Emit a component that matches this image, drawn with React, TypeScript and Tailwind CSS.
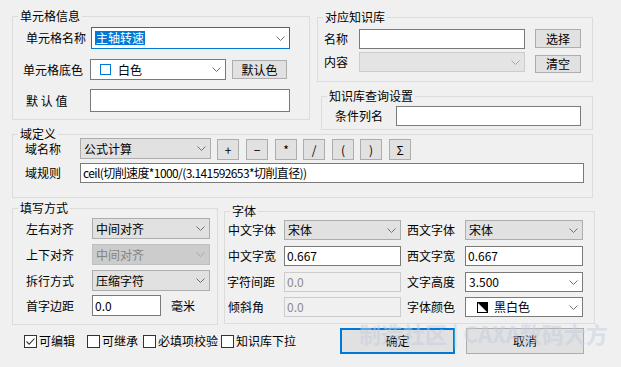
import React from 'react';
import clsx from 'clsx';

type ComboKind = 'edit' | 'focus' | 'list' | 'disabled' | 'disabledEdit';

const comboKinds: Record<ComboKind, string> = {
  edit: 'bg-white border-[#7a7a7a]',
  focus: 'bg-white border-[#0078d7]',
  list: 'bg-[#e1e1e1] border-[#adadad]',
  disabled: 'bg-[#cccccc] border-[#bfbfbf] text-[#838383]',
  disabledEdit: 'bg-[#e4e4e4] border-[#cccccc]',
};

const Chevron = ({ light }: { light?: boolean }) => (
  <svg width="9" height="5" viewBox="0 0 9 5" className="shrink-0">
    <path
      d="M0.5 0.5 L4.5 4.5 L8.5 0.5"
      fill="none"
      className={light ? 'stroke-[#a8a8a8]' : 'stroke-[#707070]'}
      strokeWidth="1"
    />
  </svg>
);

const Combo: React.FC<{ kind?: ComboKind; className?: string; children?: React.ReactNode }> = ({
  kind = 'edit',
  className,
  children,
}) => (
  <div className={clsx('flex items-center border pl-[3px] pr-[4px] shrink-0', comboKinds[kind], className)}>
    <div className="flex-1 flex items-center min-w-0 whitespace-nowrap">{children}</div>
    <Chevron light={kind === 'disabled' || kind === 'disabledEdit'} />
  </div>
);

const TextBox: React.FC<{ disabled?: boolean; className?: string; children?: React.ReactNode }> = ({
  disabled,
  className,
  children,
}) => (
  <div
    className={clsx(
      'flex items-center border pl-[2px] whitespace-nowrap shrink-0',
      disabled ? 'bg-[#f0f0f0] border-[#cccccc] text-[#8a8a8a]' : 'bg-white border-[#7a7a7a]',
      className
    )}
  >
    {children}
  </div>
);

const Button: React.FC<{ className?: string; primary?: boolean; children?: React.ReactNode }> = ({
  className,
  primary,
  children,
}) => (
  <div
    className={clsx(
      'flex items-center justify-center bg-[#e1e1e1] shrink-0',
      primary ? 'border-2 border-[#0078d7]' : 'border border-[#adadad]',
      className
    )}
  >
    {children}
  </div>
);

const GroupBox: React.FC<{ title: string; className?: string; children?: React.ReactNode }> = ({
  title,
  className,
  children,
}) => (
  <fieldset className={clsx('border border-[#dcdcdc] min-w-0 shrink-0', className)}>
    <legend className="ml-[5px] px-[2px] leading-[14px]">{title}</legend>
    {children}
  </fieldset>
);

const CheckBox: React.FC<{ checked?: boolean; label: string; className?: string }> = ({ checked, label, className }) => (
  <div className={clsx('flex items-center shrink-0', className)}>
    <div className="w-[13px] h-[13px] border border-[#333333] bg-white flex items-center justify-center">
      {checked && (
        <svg width="11" height="11" viewBox="0 0 11 11">
          <path d="M1.5 5.5 L4.2 8.2 L9.5 2.5" fill="none" className="stroke-[#333333]" strokeWidth="1.1" />
        </svg>
      )}
    </div>
    <span className="ml-[2px]">{label}</span>
  </div>
);

// operator buttons of the 域名称 row: [glyph, left margin]
const ops: [string, string][] = [
  ['+', 'ml-[6px]'],
  ['−', 'ml-[7px]'],
  ['*', 'ml-[7px]'],
  ['/', 'ml-[6px]'],
  ['(', 'ml-[7px]'],
  [')', 'ml-[6px]'],
  ['Σ', 'ml-[7px]'],
];

export default function App() {
  return (
    <div className="relative w-[621px] h-[367px] overflow-hidden bg-[#f0f0f0] text-[12px] leading-[14px] text-black font-['Noto_Sans_CJK_SC','Microsoft_YaHei',sans-serif]">
      {/* top: 单元格信息 + 知识库 */}
      <div className="flex items-start pt-[9px]">
        <GroupBox title="单元格信息" className="ml-[12px] w-[298px] h-[111px]">
          <div className="flex items-center h-[22px] mt-[4px] pl-[13px]">
            <span className="w-[65px]">单元格名称</span>
            <Combo kind="focus" className="w-[199px] h-[22px]">
              <span className="bg-[#0078d7] text-white px-[1px]">主轴转速</span>
            </Combo>
          </div>
          <div className="flex items-center h-[21px] mt-[10px] pl-[10px]">
            <span className="w-[67px]">单元格底色</span>
            <Combo className="w-[136px] h-[21px]">
              <span className="ml-[6px] w-[11px] h-[11px] border border-[#0078d7] bg-white" />
              <span className="ml-[7px]">白色</span>
            </Combo>
            <Button className="ml-[6px] w-[55px] h-[19px]">默认色</Button>
          </div>
          <div className="flex items-center h-[23px] mt-[9px] pl-[13px]">
            <span className="w-[64px]">默 认 值</span>
            <TextBox className="w-[200px] h-[23px]" />
          </div>
        </GroupBox>

        <div className="ml-[7px] flex flex-col">
          <GroupBox title="对应知识库" className="mt-[1px] w-[276px] h-[72px]">
            <div className="flex items-start mt-[5px] pl-[6px]">
              <span className="w-[35px] leading-[20px]">名称</span>
              <TextBox className="w-[166px] h-[20px]" />
              <Button className="ml-[10px] w-[46px] h-[19px]">选择</Button>
            </div>
            <div className="flex items-start mt-[3px] pl-[6px]">
              <span className="w-[35px] leading-[20px]">内容</span>
              <Combo kind="disabledEdit" className="w-[166px] h-[20px]" />
              <Button className="ml-[10px] mt-[3px] w-[46px] h-[18px]">清空</Button>
            </div>
          </GroupBox>
          <GroupBox title="知识库查询设置" className="ml-[4px] mt-[7px] w-[272px] h-[41px]">
            <div className="flex items-start mt-[3px] pl-[13px]">
              <span className="w-[61px] leading-[20px]">条件列名</span>
              <TextBox className="w-[185px] h-[20px]" />
            </div>
          </GroupBox>
        </div>
      </div>

      {/* 域定义 */}
      <GroupBox title="域定义" className="-mt-[3px] ml-[12px] w-[581px] h-[71px]">
        <div className="flex items-start h-[22px] -mt-[3px] pl-[12px]">
          <span className="w-[55px] mt-[4px]">域名称</span>
          <Combo kind="list" className="w-[131px] h-[21px]">
            公式计算
          </Combo>
          {ops.map(([g, m]) => (
            <Button key={g} className={clsx('mt-[1px] w-[22px] h-[21px]', m)}>
              {g}
            </Button>
          ))}
        </div>
        <div className="flex items-start mt-[3px] pl-[12px]">
          <span className="w-[55px] leading-[20px]">域规则</span>
          <TextBox className="w-[504px] h-[20px] tracking-[-0.6px]">ceil(切削速度*1000/(3.141592653*切削直径))</TextBox>
        </div>
      </GroupBox>

      {/* 填写方式 + 字体 */}
      <div className="flex items-start mt-[3px]">
        <GroupBox title="填写方式" className="ml-[12px] w-[206px] h-[124px]">
          <div className="flex items-center h-[21px] mt-[3px] pl-[13px]">
            <span className="w-[66px]">左右对齐</span>
            <Combo kind="list" className="w-[118px] h-[21px]">
              中间对齐
            </Combo>
          </div>
          <div className="flex items-center h-[21px] mt-[5px] pl-[13px]">
            <span className="w-[66px]">上下对齐</span>
            <Combo kind="disabled" className="w-[118px] h-[21px]">
              中间对齐
            </Combo>
          </div>
          <div className="flex items-center h-[21px] mt-[5px] pl-[13px]">
            <span className="w-[66px]">拆行方式</span>
            <Combo kind="list" className="w-[118px] h-[21px]">
              压缩字符
            </Combo>
          </div>
          <div className="flex items-center h-[21px] mt-[4px] pl-[13px]">
            <span className="w-[66px]">首字边距</span>
            <TextBox className="w-[69px] h-[21px]">0.0</TextBox>
            <span className="ml-[10px]">毫米</span>
          </div>
        </GroupBox>

        <GroupBox title="字体" className="ml-[6px] mt-[3px] w-[371px] h-[120px]">
          <div className="flex items-center h-[20px] mt-[2px] pl-[3px]">
            <span className="w-[56px]">中文字体</span>
            <Combo kind="list" className="w-[117px] h-[20px]">
              宋体
            </Combo>
            <span className="ml-[6px] w-[58px]">西文字体</span>
            <Combo kind="list" className="w-[118px] h-[20px]">
              宋体
            </Combo>
          </div>
          <div className="flex items-center h-[20px] mt-[6px] pl-[3px]">
            <span className="w-[56px]">中文字宽</span>
            <TextBox className="w-[117px] h-[20px]">0.667</TextBox>
            <span className="ml-[6px] w-[58px]">西文字宽</span>
            <TextBox className="w-[118px] h-[20px]">0.667</TextBox>
          </div>
          <div className="flex items-center h-[20px] mt-[6px] pl-[2px]">
            <span className="w-[57px]">字符间距</span>
            <TextBox disabled className="w-[117px] h-[20px]">
              0.0
            </TextBox>
            <span className="ml-[6px] w-[58px]">文字高度</span>
            <Combo className="w-[118px] h-[20px]">3.500</Combo>
          </div>
          <div className="flex items-center h-[20px] mt-[5px] pl-[3px]">
            <span className="w-[56px]">倾斜角</span>
            <TextBox disabled className="w-[117px] h-[20px]">
              0.0
            </TextBox>
            <span className="ml-[6px] w-[58px]">字体颜色</span>
            <Combo className="w-[118px] h-[20px]">
              <svg width="11" height="11" viewBox="0 0 11 11" className="ml-[8px] shrink-0">
                <rect x="0.5" y="0.5" width="10" height="10" fill="#ffffff" stroke="#000000" />
                <polygon points="0.5,0.5 10.5,0.5 10.5,10.5" fill="#000000" />
              </svg>
              <span className="ml-[6px]">黑白色</span>
            </Combo>
          </div>
        </GroupBox>
      </div>

      {/* 复选框 + 按钮 */}
      <div className="flex items-start mt-[3px] pl-[24px]">
        <div className="flex items-center w-[316px] mt-[6px]">
          <CheckBox checked label="可编辑" className="w-[63px]" />
          <CheckBox label="可继承" className="w-[56px]" />
          <CheckBox label="必填项校验" className="w-[78px]" />
          <CheckBox label="知识库下拉" />
        </div>
        <Button primary className="w-[115px] h-[26px]">
          确定
        </Button>
        <Button className="ml-[11px] w-[118px] h-[26px]">取消</Button>
      </div>

      {/* watermark */}
      <div className="absolute left-[359px] top-[321px] text-[22px] leading-[24px] font-bold text-[#c3cde0] opacity-50 whitespace-nowrap pointer-events-none">
        制造社区 | CAXA数码大方
      </div>
    </div>
  );
}
